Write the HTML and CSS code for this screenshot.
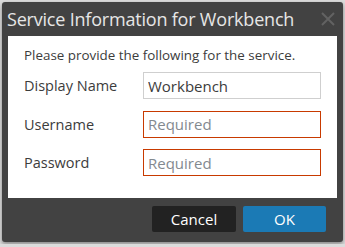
FILE: index.html
```html
<!DOCTYPE html>
<html lang="en">

<head>
    <meta charset="UTF-8">
    <meta name="viewport" content="width=device-width, initial-scale=1.0">
    <title>Service Information</title>
    <link rel="stylesheet" href="styles.css">
</head>

<body>
    <div class="dialog">
        <div class="dialog__header">
            <h1 class="dialog__title">Service Information for Workbench</h1>
            <span class="dialog__close">
                <svg xmlns="http://www.w3.org/2000/svg" viewBox="0 0 14 14" width="14" height="14">
                    <path d="M1 1L13 13M13 1L1 13" stroke="currentColor" stroke-width="2" fill="none" />
                </svg>
            </span>
        </div>
        <div class="dialog__body">
            <p class="dialog__intro">Please provide the following for the service.</p>
            <div class="form">
                <label class="form__label" for="display-name">Display Name</label>
                <input class="form__input" id="display-name" type="text" value="Workbench">
                <label class="form__label" for="username">Username</label>
                <input class="form__input form__input--required" id="username" type="text" placeholder="Required">
                <label class="form__label" for="password">Password</label>
                <input class="form__input form__input--required" id="password" type="password" placeholder="Required">
            </div>
        </div>
        <div class="dialog__footer">
            <button class="button button--cancel">Cancel</button>
            <button class="button button--ok">OK</button>
        </div>
    </div>
</body>

</html>
```

FILE: styles.css
```css
:root {
    --frame-color: #424242;
    --title-color: #e6e6e6;
    --text-color: #3c3c3c;
    --border-color: #cfcfcf;
    --error-color: #c83a00;
    --placeholder-color: #83898f;
    --ok-color: #1b7ab5;
    --cancel-color: #222222;
}

body {
    margin: 0;
    padding: 2px;
    background-color: #dcdcdc;
    font-family: 'Open Sans', 'Noto Sans', sans-serif;
}

.dialog {
    width: 341px;
    height: 240px;
    background-color: var(--frame-color);
    border-radius: 3px;
    box-shadow: 0 2px 4px rgba(0, 0, 0, 0.4);
    display: flex;
    flex-direction: column;
}

.dialog__header {
    height: 34px;
    display: flex;
    align-items: center;
    justify-content: space-between;
    padding: 0 8px 0 5px;
}

.dialog__title {
    margin: 0;
    font-size: 18px;
    font-weight: 400;
    letter-spacing: -0.2px;
    color: var(--title-color);
    line-height: 1;
    white-space: nowrap;
}

.dialog__close {
    color: #626262;
    display: flex;
}

.dialog__body {
    margin: 0 6px;
    height: 162px;
    background-color: #fff;
    padding: 10px 16px 0 16px;
    box-sizing: border-box;
}

.dialog__intro {
    margin: 0;
    font-size: 13.4px;
    color: var(--text-color);
    line-height: 18px;
}

.dialog__intro,
.form__label {
    white-space: nowrap;
}

.form {
    display: grid;
    grid-template-columns: 119px 178px;
    row-gap: 11.5px;
    margin-top: 8px;
    align-items: center;
}

.form__label {
    font-size: 14.5px;
    color: var(--text-color);
}

.form__input {
    height: 27px;
    box-sizing: border-box;
    border: 1px solid var(--border-color);
    padding: 0 4px;
    font-family: inherit;
    font-size: 15px;
    color: var(--text-color);
    outline: none;
}

.form__input--required {
    border-color: var(--error-color);
}

.form__input::placeholder {
    color: var(--placeholder-color);
}

.dialog__footer {
    display: flex;
    justify-content: flex-end;
    gap: 7px;
    padding: 8px 17px 0 0;
}

.button {
    width: 84px;
    height: 26px;
    border: none;
    border-radius: 2px;
    color: #fff;
    font-family: inherit;
    font-size: 15px;
    cursor: pointer;
}

.button--cancel {
    background-color: var(--cancel-color);
}

.button--ok {
    width: 83px;
    background-color: var(--ok-color);
}
```
